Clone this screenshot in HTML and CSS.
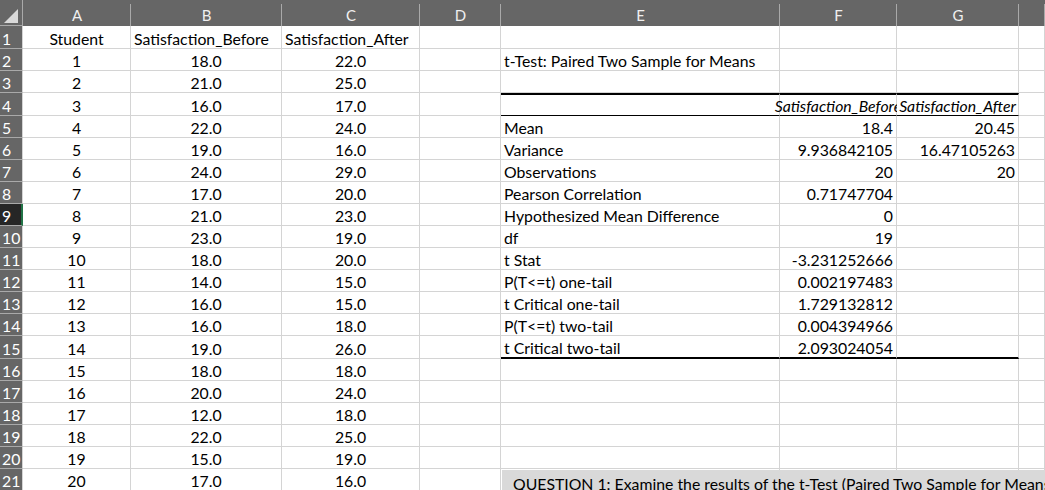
FILE: index.html
```html
<!DOCTYPE html>
<html>
<head>
<meta charset="utf-8">
<link rel="stylesheet" href="styles.css">
</head>
<body>
<div class="sheet">
  <div class="row head">
    <div class="hc corner"><svg class="tri" width="22" height="26" viewBox="0 0 22 26"><polygon points="18,9 18,23 4,23" fill="#d9d9d9"/></svg></div>
    <div class="hc">A</div><div class="hc">B</div><div class="hc">C</div><div class="hc">D</div><div class="hc">E</div><div class="hc">F</div><div class="hc">G</div><div class="hc"></div>
  </div>
  <div class="row t">
    <div class="rh">1</div><div class="c ctr">Student</div><div class="c">Satisfaction_Before</div><div class="c">Satisfaction_After</div><div class="c"></div><div class="c"></div><div class="c"></div><div class="c"></div><div class="c"></div>
  </div>
  <div class="row">
    <div class="rh">2</div><div class="c ctr">1</div><div class="c ctr">18.0</div><div class="c ctr">22.0</div><div class="c"></div><div class="c">t-Test: Paired Two Sample for Means</div><div class="c"></div><div class="c"></div><div class="c"></div>
  </div>
  <div class="row">
    <div class="rh">3</div><div class="c ctr">2</div><div class="c ctr">21.0</div><div class="c ctr">25.0</div><div class="c"></div><div class="c"></div><div class="c"></div><div class="c"></div><div class="c"></div>
  </div>
  <div class="row t">
    <div class="rh">4</div><div class="c ctr">3</div><div class="c ctr">16.0</div><div class="c ctr">17.0</div><div class="c"></div><div class="c th"></div><div class="c th ctr it clip">Satisfaction_Before</div><div class="c th ctr it">Satisfaction_After</div><div class="c"></div>
  </div>
  <div class="row">
    <div class="rh">5</div><div class="c ctr">4</div><div class="c ctr">22.0</div><div class="c ctr">24.0</div><div class="c"></div><div class="c">Mean</div><div class="c rt">18.4</div><div class="c rt">20.45</div><div class="c"></div>
  </div>
  <div class="row">
    <div class="rh">6</div><div class="c ctr">5</div><div class="c ctr">19.0</div><div class="c ctr">16.0</div><div class="c"></div><div class="c">Variance</div><div class="c rt">9.936842105</div><div class="c rt">16.47105263</div><div class="c"></div>
  </div>
  <div class="row">
    <div class="rh">7</div><div class="c ctr">6</div><div class="c ctr">24.0</div><div class="c ctr">29.0</div><div class="c"></div><div class="c">Observations</div><div class="c rt">20</div><div class="c rt">20</div><div class="c"></div>
  </div>
  <div class="row">
    <div class="rh">8</div><div class="c ctr">7</div><div class="c ctr">17.0</div><div class="c ctr">20.0</div><div class="c"></div><div class="c">Pearson Correlation</div><div class="c rt">0.71747704</div><div class="c"></div><div class="c"></div>
  </div>
  <div class="row">
    <div class="rh sel">9</div><div class="c ctr">8</div><div class="c ctr">21.0</div><div class="c ctr">23.0</div><div class="c"></div><div class="c">Hypothesized Mean Difference</div><div class="c rt">0</div><div class="c"></div><div class="c"></div>
  </div>
  <div class="row">
    <div class="rh">10</div><div class="c ctr">9</div><div class="c ctr">23.0</div><div class="c ctr">19.0</div><div class="c"></div><div class="c">df</div><div class="c rt">19</div><div class="c"></div><div class="c"></div>
  </div>
  <div class="row">
    <div class="rh">11</div><div class="c ctr">10</div><div class="c ctr">18.0</div><div class="c ctr">20.0</div><div class="c"></div><div class="c">t Stat</div><div class="c rt">-3.231252666</div><div class="c"></div><div class="c"></div>
  </div>
  <div class="row">
    <div class="rh">12</div><div class="c ctr">11</div><div class="c ctr">14.0</div><div class="c ctr">15.0</div><div class="c"></div><div class="c">P(T&lt;=t) one-tail</div><div class="c rt">0.002197483</div><div class="c"></div><div class="c"></div>
  </div>
  <div class="row">
    <div class="rh">13</div><div class="c ctr">12</div><div class="c ctr">16.0</div><div class="c ctr">15.0</div><div class="c"></div><div class="c">t Critical one-tail</div><div class="c rt">1.729132812</div><div class="c"></div><div class="c"></div>
  </div>
  <div class="row">
    <div class="rh">14</div><div class="c ctr">13</div><div class="c ctr">16.0</div><div class="c ctr">18.0</div><div class="c"></div><div class="c">P(T&lt;=t) two-tail</div><div class="c rt">0.004394966</div><div class="c"></div><div class="c"></div>
  </div>
  <div class="row t">
    <div class="rh">15</div><div class="c ctr">14</div><div class="c ctr">19.0</div><div class="c ctr">26.0</div><div class="c"></div><div class="c tb">t Critical two-tail</div><div class="c rt tb">2.093024054</div><div class="c tb"></div><div class="c"></div>
  </div>
  <div class="row">
    <div class="rh">16</div><div class="c ctr">15</div><div class="c ctr">18.0</div><div class="c ctr">18.0</div><div class="c"></div><div class="c"></div><div class="c"></div><div class="c"></div><div class="c"></div>
  </div>
  <div class="row">
    <div class="rh">17</div><div class="c ctr">16</div><div class="c ctr">20.0</div><div class="c ctr">24.0</div><div class="c"></div><div class="c"></div><div class="c"></div><div class="c"></div><div class="c"></div>
  </div>
  <div class="row">
    <div class="rh">18</div><div class="c ctr">17</div><div class="c ctr">12.0</div><div class="c ctr">18.0</div><div class="c"></div><div class="c"></div><div class="c"></div><div class="c"></div><div class="c"></div>
  </div>
  <div class="row">
    <div class="rh">19</div><div class="c ctr">18</div><div class="c ctr">22.0</div><div class="c ctr">25.0</div><div class="c"></div><div class="c"></div><div class="c"></div><div class="c"></div><div class="c"></div>
  </div>
  <div class="row">
    <div class="rh">20</div><div class="c ctr">19</div><div class="c ctr">15.0</div><div class="c ctr">19.0</div><div class="c"></div><div class="c"></div><div class="c"></div><div class="c"></div><div class="c"></div>
  </div>
  <div class="row">
    <div class="rh">21</div><div class="c ctr">20</div><div class="c ctr">17.0</div><div class="c ctr">16.0</div><div class="c"></div><div class="c"></div><div class="c"></div><div class="c"></div><div class="c"></div>
  </div>
</div>
<div class="note">QUESTION 1: Examine the results of the t-Test (Paired Two Sample for Means) above. What do they tell you about the change in satisfaction?</div>
</body>
</html>
```

FILE: styles.css
```css
* { box-sizing: border-box; margin: 0; padding: 0; }
html, body { width: 1045px; height: 490px; overflow: hidden; background: #fff; }
body {
  position: relative;
  font-family: "Lato", "Liberation Sans", sans-serif;
  font-size: 15.8px;
  color: #000;
}
.sheet { display: flex; flex-direction: column; }
.row {
  display: grid;
  grid-template-columns: 23px 108px 151px 138px 81px 279px 117px 122px 1fr;
  height: 22px;
}
.row.t { height: 23px; }
.head { height: 26px; background: #666666; color: #f0f0f0; font-size: 15px; }
.hc {
  display: flex;
  align-items: center;
  justify-content: center;
  padding-top: 3px;
  background: linear-gradient(#a9a9a9, #a9a9a9) right 4px / 1px 22px no-repeat;
}
.corner {
  padding: 0;
  align-items: stretch;
  justify-content: flex-start;
  background: linear-gradient(#a9a9a9, #a9a9a9) right 0 / 1px 26px no-repeat, linear-gradient(#a9a9a9, #a9a9a9) left bottom / 22px 1px no-repeat;
}
.tri { display: block; }
.rh {
  background: #666666;
  color: #ffffff;
  border-bottom: 1px solid #a9a9a9;
  border-right: 1px solid #d4d4d4;
  display: flex;
  align-items: flex-end;
  padding: 0 0 0 2px;
  white-space: nowrap;
  overflow: hidden;
}
.rh.sel { background: #262626; border-right: 2px solid #217346; }
.c {
  border-right: 1px solid #d4d4d4;
  border-bottom: 1px solid #d4d4d4;
  display: flex;
  align-items: flex-end;
  padding: 0 3px 0;
  white-space: nowrap;
}
.ctr { justify-content: center; }
.rt { justify-content: flex-end; }
.it { font-style: italic; }
.clip { clip-path: inset(0 0 0 -200px); }
.th { border-top: 2px solid #000; border-bottom: 1px solid #000; }
.tb { border-bottom: 2px solid #000; }
.note {
  position: absolute;
  left: 502px;
  top: 470px;
  width: 620px;
  height: 40px;
  background: #d9d9d9;
  padding: 4px 11px;
  white-space: nowrap;
}
```
